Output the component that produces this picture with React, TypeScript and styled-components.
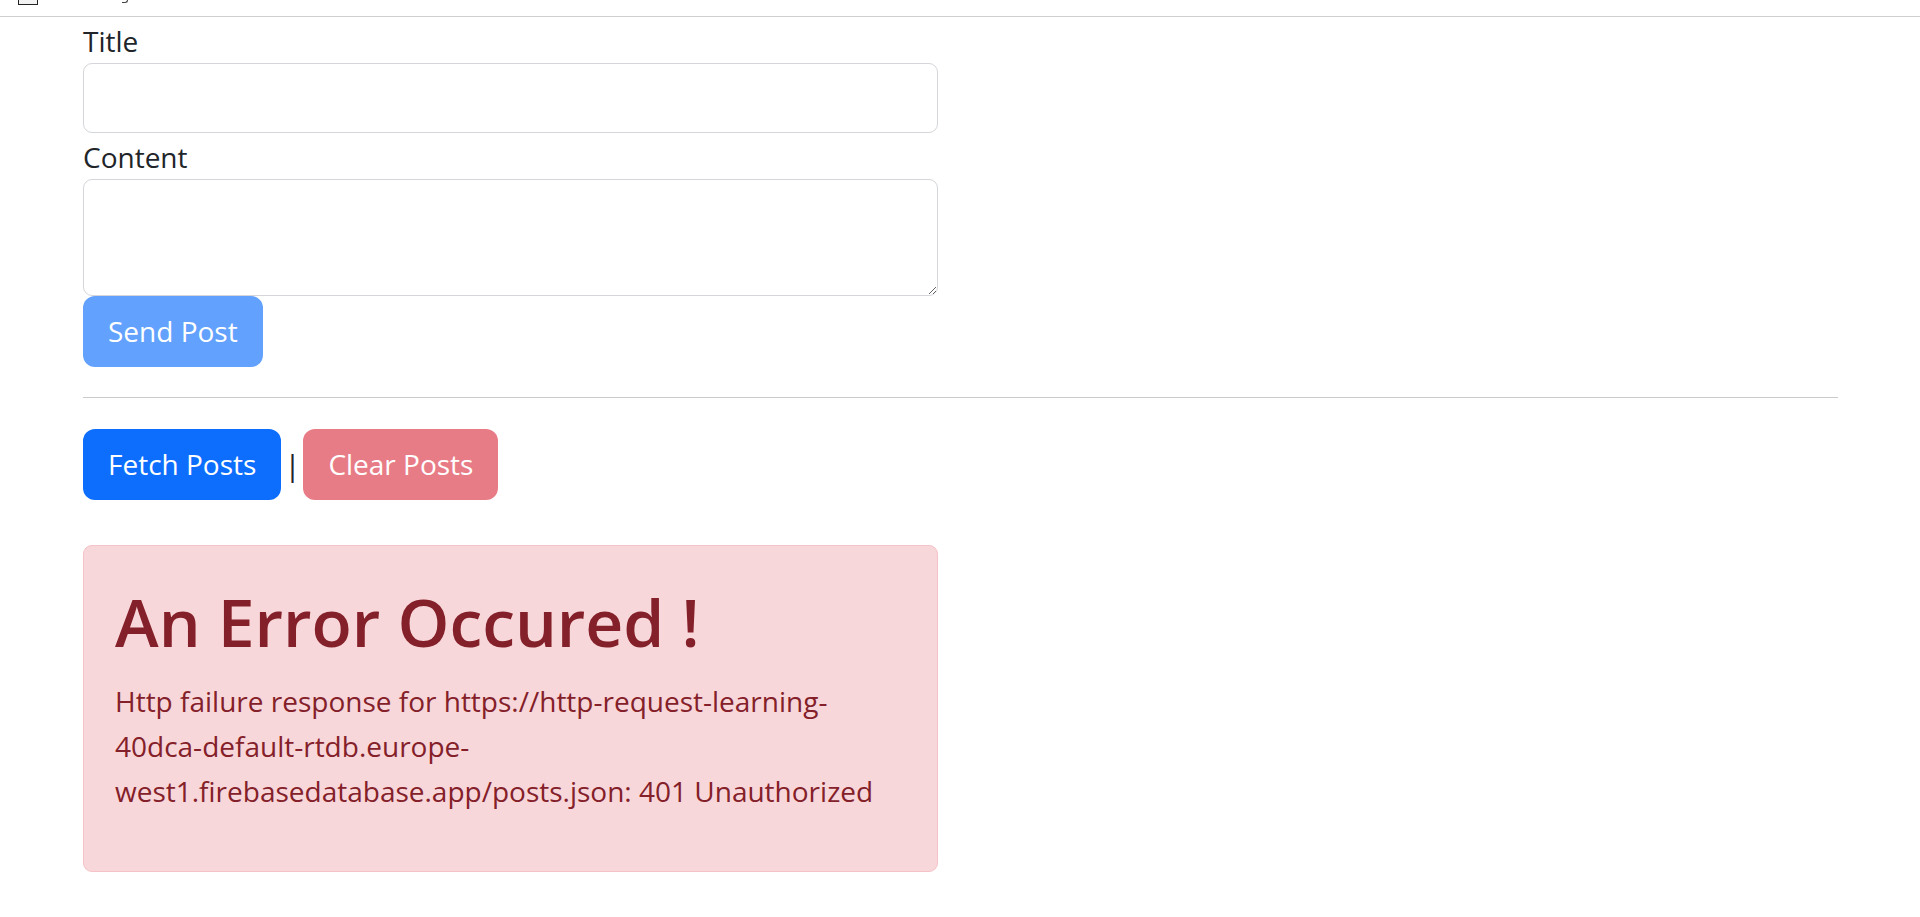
import React from "react";
import styled, { createGlobalStyle } from "styled-components";

const GlobalStyle = createGlobalStyle`
  html, body {
    margin: 0;
    padding: 0;
    background: #ffffff;
  }
  body {
    font-family: "Open Sans", "Noto Sans", "Liberation Sans", sans-serif;
    font-size: 28px;
    line-height: 1.5;
    color: #212529;
  }
  * { box-sizing: border-box; }
`;

const TopStrip = styled.div`
  height: 17px;
  border-bottom: 1px solid #cfcfcf;
  display: flex;
  align-items: flex-start;
  gap: 84px;
  padding-left: 18px;
  overflow: hidden;
`;

const ClippedIcon = styled.span`
  display: block;
  width: 20px;
  height: 5px;
  background: #f2f2f2;
  border: 1.5px solid #222;
  border-top: none;
`;

const ClippedGlyph = styled.span`
  display: block;
  width: 6px;
  height: 3px;
  border-bottom: 1.5px solid #444;
  border-right: 1.5px solid #444;
  border-bottom-right-radius: 3px;
`;

const Page = styled.main`
  padding: 0 82px 0 83px;
`;

const FormColumn = styled.form`
  width: 855px;
  display: flex;
  flex-direction: column;
  align-items: flex-start;
`;

const Label = styled.label`
  display: block;
  font-size: 28px;
  line-height: 46px;
  padding-top: 1px;
  margin-bottom: -1px;
`;

const TextInput = styled.input`
  width: 100%;
  height: 70px;
  border: 1px solid #d4d6da;
  border-radius: 9px;
  padding: 12px 18px;
  font: inherit;
  background: #fff;
  outline: none;
`;

const TextArea = styled.textarea`
  width: 100%;
  height: 117px;
  border: 1px solid #d4d6da;
  border-radius: 9px;
  padding: 12px 18px;
  font: inherit;
  background: #fff;
  outline: none;
  display: block;
`;

const Button = styled.button<{ $tone: "primary" | "primaryMuted" | "dangerMuted" }>`
  height: 71px;
  padding: 0 24px;
  border: 1px solid transparent;
  border-radius: 12px;
  font-family: inherit;
  font-size: 28px;
  line-height: 45px;
  color: #ffffff;
  cursor: pointer;
  background: ${(p) =>
    p.$tone === "primary"
      ? "#0d6efd"
      : p.$tone === "primaryMuted"
      ? "#62a1fe"
      : "#e87c86"};
`;

const Divider = styled.hr`
  border: none;
  border-top: 1px solid #cbcbcb;
  margin: 30px 0 31px;
`;

const ActionRow = styled.div`
  display: flex;
  align-items: center;
  gap: 10px;
`;

const Separator = styled.span`
  width: 2px;
  display: flex;
  justify-content: center;
  font-size: 30px;
  line-height: 45px;
  color: #212529;
`;

const AlertBox = styled.div`
  width: 855px;
  margin-top: 45px;
  background: #f8d7da;
  border: 1px solid #f5c2c7;
  border-radius: 9px;
  padding: 32px 31px 30px;
  color: #842029;
`;

const AlertHeading = styled.h1`
  margin: 0 0 15px;
  font-size: 66px;
  line-height: 86px;
  font-weight: 600;
`;

const AlertText = styled.p`
  margin: 0 0 27px;
  font-size: 28px;
  line-height: 45px;
`;

export default function App() {
  return (
    <>
      <GlobalStyle />
      <TopStrip>
        <ClippedIcon />
        <ClippedGlyph />
      </TopStrip>
      <Page>
        <FormColumn onSubmit={(e) => e.preventDefault()}>
          <Label htmlFor="title">Title</Label>
          <TextInput id="title" type="text" />
          <Label htmlFor="content">Content</Label>
          <TextArea id="content" />
          <Button type="submit" $tone="primaryMuted">
            Send Post
          </Button>
        </FormColumn>
        <Divider />
        <ActionRow>
          <Button type="button" $tone="primary">
            Fetch Posts
          </Button>
          <Separator>|</Separator>
          <Button type="button" $tone="dangerMuted">
            Clear Posts
          </Button>
        </ActionRow>
        <AlertBox>
          <AlertHeading>An Error Occured !</AlertHeading>
          <AlertText>
            Http failure response for
            https://http-request-learning-40dca-default-rtdb.europe-west1.firebasedatabase.app/posts.json:
            401 Unauthorized
          </AlertText>
        </AlertBox>
      </Page>
    </>
  );
}
